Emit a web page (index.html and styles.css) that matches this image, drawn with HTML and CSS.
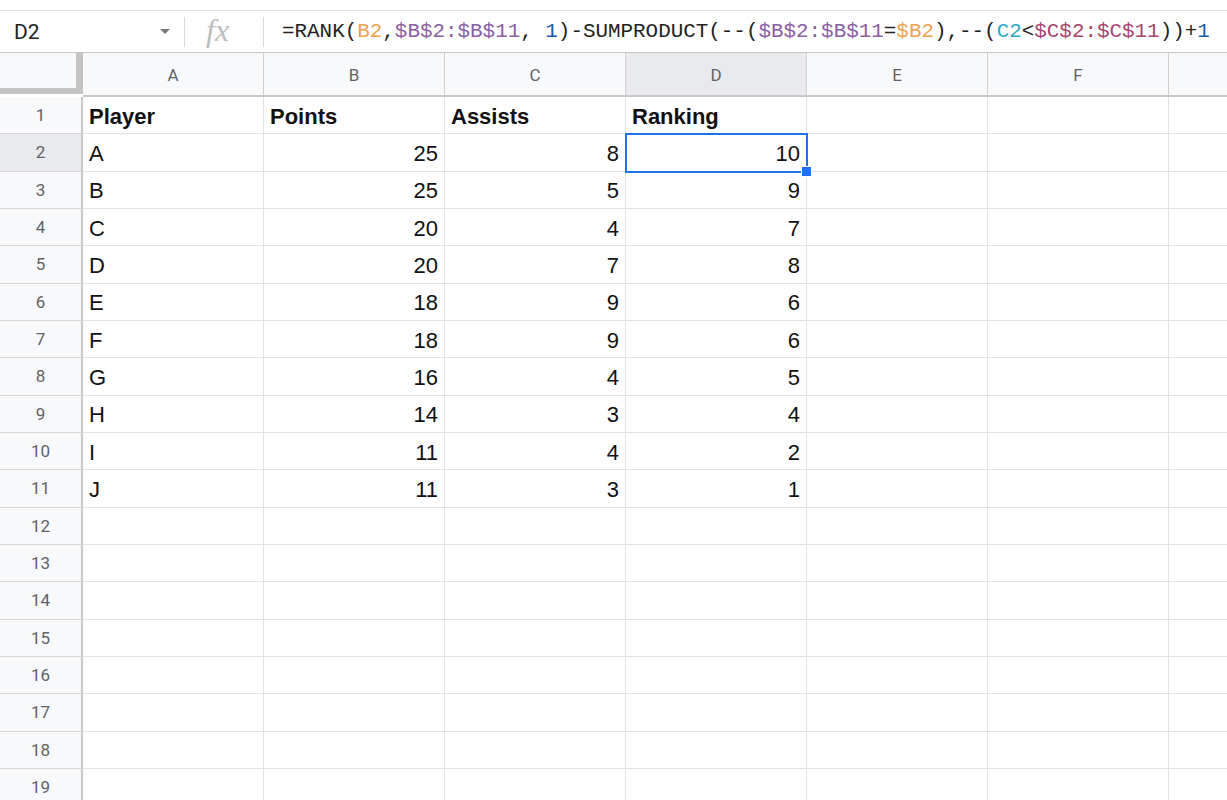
FILE: index.html
```html
<html>
  <head>
    <meta charset="utf-8" />
    <link rel="stylesheet" href="styles.css">
  </head>
  <body>
    <div class="formulaBar">
      <div class="formulaBar__nameBox">
        <span class="formulaBar__name">D2</span>
        <span class="formulaBar__caret"></span>
      </div>
      <div class="formulaBar__fx">fx</div>
      <div class="formulaBar__input">=RANK(<span class="ref--orange">B2</span>,<span class="ref--purple">$B$2:$B$11</span>, <span class="ref--blue">1</span>)-SUMPRODUCT(--(<span class="ref--purple">$B$2:$B$11</span>=<span class="ref--orange">$B2</span>),--(<span class="ref--teal">C2</span>&lt;<span class="ref--maroon">$C$2:$C$11</span>))+<span class="ref--blue">1</span></div>
    </div>

    <div class="sheet">
      <div class="sheet__row sheet__row--head">
        <div class="sheet__corner"></div>
        <div class="sheet__colHead">A</div>
        <div class="sheet__colHead">B</div>
        <div class="sheet__colHead">C</div>
        <div class="sheet__colHead is-selected">D</div>
        <div class="sheet__colHead">E</div>
        <div class="sheet__colHead">F</div>
        <div class="sheet__colHead"></div>
      </div>

      <div class="sheet__row">
        <div class="sheet__rowHead">1</div>
        <div class="sheet__cell is-bold">Player</div>
        <div class="sheet__cell is-bold">Points</div>
        <div class="sheet__cell is-bold">Assists</div>
        <div class="sheet__cell is-bold">Ranking</div>
        <div class="sheet__cell"></div>
        <div class="sheet__cell"></div>
        <div class="sheet__cell"></div>
      </div>
      <div class="sheet__row">
        <div class="sheet__rowHead is-selected">2</div>
        <div class="sheet__cell">A</div>
        <div class="sheet__cell is-num">25</div>
        <div class="sheet__cell is-num">8</div>
        <div class="sheet__cell is-num is-active">10</div>
        <div class="sheet__cell"></div>
        <div class="sheet__cell"></div>
        <div class="sheet__cell"></div>
      </div>
      <div class="sheet__row">
        <div class="sheet__rowHead">3</div>
        <div class="sheet__cell">B</div>
        <div class="sheet__cell is-num">25</div>
        <div class="sheet__cell is-num">5</div>
        <div class="sheet__cell is-num">9</div>
        <div class="sheet__cell"></div>
        <div class="sheet__cell"></div>
        <div class="sheet__cell"></div>
      </div>
      <div class="sheet__row">
        <div class="sheet__rowHead">4</div>
        <div class="sheet__cell">C</div>
        <div class="sheet__cell is-num">20</div>
        <div class="sheet__cell is-num">4</div>
        <div class="sheet__cell is-num">7</div>
        <div class="sheet__cell"></div>
        <div class="sheet__cell"></div>
        <div class="sheet__cell"></div>
      </div>
      <div class="sheet__row">
        <div class="sheet__rowHead">5</div>
        <div class="sheet__cell">D</div>
        <div class="sheet__cell is-num">20</div>
        <div class="sheet__cell is-num">7</div>
        <div class="sheet__cell is-num">8</div>
        <div class="sheet__cell"></div>
        <div class="sheet__cell"></div>
        <div class="sheet__cell"></div>
      </div>
      <div class="sheet__row">
        <div class="sheet__rowHead">6</div>
        <div class="sheet__cell">E</div>
        <div class="sheet__cell is-num">18</div>
        <div class="sheet__cell is-num">9</div>
        <div class="sheet__cell is-num">6</div>
        <div class="sheet__cell"></div>
        <div class="sheet__cell"></div>
        <div class="sheet__cell"></div>
      </div>
      <div class="sheet__row">
        <div class="sheet__rowHead">7</div>
        <div class="sheet__cell">F</div>
        <div class="sheet__cell is-num">18</div>
        <div class="sheet__cell is-num">9</div>
        <div class="sheet__cell is-num">6</div>
        <div class="sheet__cell"></div>
        <div class="sheet__cell"></div>
        <div class="sheet__cell"></div>
      </div>
      <div class="sheet__row">
        <div class="sheet__rowHead">8</div>
        <div class="sheet__cell">G</div>
        <div class="sheet__cell is-num">16</div>
        <div class="sheet__cell is-num">4</div>
        <div class="sheet__cell is-num">5</div>
        <div class="sheet__cell"></div>
        <div class="sheet__cell"></div>
        <div class="sheet__cell"></div>
      </div>
      <div class="sheet__row">
        <div class="sheet__rowHead">9</div>
        <div class="sheet__cell">H</div>
        <div class="sheet__cell is-num">14</div>
        <div class="sheet__cell is-num">3</div>
        <div class="sheet__cell is-num">4</div>
        <div class="sheet__cell"></div>
        <div class="sheet__cell"></div>
        <div class="sheet__cell"></div>
      </div>
      <div class="sheet__row">
        <div class="sheet__rowHead">10</div>
        <div class="sheet__cell">I</div>
        <div class="sheet__cell is-num">11</div>
        <div class="sheet__cell is-num">4</div>
        <div class="sheet__cell is-num">2</div>
        <div class="sheet__cell"></div>
        <div class="sheet__cell"></div>
        <div class="sheet__cell"></div>
      </div>
      <div class="sheet__row">
        <div class="sheet__rowHead">11</div>
        <div class="sheet__cell">J</div>
        <div class="sheet__cell is-num">11</div>
        <div class="sheet__cell is-num">3</div>
        <div class="sheet__cell is-num">1</div>
        <div class="sheet__cell"></div>
        <div class="sheet__cell"></div>
        <div class="sheet__cell"></div>
      </div>
      <div class="sheet__row">
        <div class="sheet__rowHead">12</div>
        <div class="sheet__cell"></div><div class="sheet__cell"></div><div class="sheet__cell"></div><div class="sheet__cell"></div><div class="sheet__cell"></div><div class="sheet__cell"></div><div class="sheet__cell"></div>
      </div>
      <div class="sheet__row">
        <div class="sheet__rowHead">13</div>
        <div class="sheet__cell"></div><div class="sheet__cell"></div><div class="sheet__cell"></div><div class="sheet__cell"></div><div class="sheet__cell"></div><div class="sheet__cell"></div><div class="sheet__cell"></div>
      </div>
      <div class="sheet__row">
        <div class="sheet__rowHead">14</div>
        <div class="sheet__cell"></div><div class="sheet__cell"></div><div class="sheet__cell"></div><div class="sheet__cell"></div><div class="sheet__cell"></div><div class="sheet__cell"></div><div class="sheet__cell"></div>
      </div>
      <div class="sheet__row">
        <div class="sheet__rowHead">15</div>
        <div class="sheet__cell"></div><div class="sheet__cell"></div><div class="sheet__cell"></div><div class="sheet__cell"></div><div class="sheet__cell"></div><div class="sheet__cell"></div><div class="sheet__cell"></div>
      </div>
      <div class="sheet__row">
        <div class="sheet__rowHead">16</div>
        <div class="sheet__cell"></div><div class="sheet__cell"></div><div class="sheet__cell"></div><div class="sheet__cell"></div><div class="sheet__cell"></div><div class="sheet__cell"></div><div class="sheet__cell"></div>
      </div>
      <div class="sheet__row">
        <div class="sheet__rowHead">17</div>
        <div class="sheet__cell"></div><div class="sheet__cell"></div><div class="sheet__cell"></div><div class="sheet__cell"></div><div class="sheet__cell"></div><div class="sheet__cell"></div><div class="sheet__cell"></div>
      </div>
      <div class="sheet__row">
        <div class="sheet__rowHead">18</div>
        <div class="sheet__cell"></div><div class="sheet__cell"></div><div class="sheet__cell"></div><div class="sheet__cell"></div><div class="sheet__cell"></div><div class="sheet__cell"></div><div class="sheet__cell"></div>
      </div>
      <div class="sheet__row">
        <div class="sheet__rowHead">19</div>
        <div class="sheet__cell"></div><div class="sheet__cell"></div><div class="sheet__cell"></div><div class="sheet__cell"></div><div class="sheet__cell"></div><div class="sheet__cell"></div><div class="sheet__cell"></div>
      </div>
    </div>
  </body>
</html>
```

FILE: styles.css
```css
html, body {
  margin: 0;
  padding: 0;
  background: #fff;
  overflow: hidden;
}

body {
  width: 1227px;
  height: 800px;
  font-family: "Liberation Sans", Arial, sans-serif;
  color: #111;
}

/* formula bar */
.formulaBar {
  box-sizing: border-box;
  margin-top: 10px;
  height: 43px;
  border-top: 1px solid #e3e3e3;
  border-bottom: 1px solid #c8c8c8;
  display: flex;
  align-items: center;
}

.formulaBar__nameBox {
  box-sizing: border-box;
  width: 185px;
  height: 30px;
  padding: 0 14px;
  border-right: 1px solid #dadada;
  display: flex;
  align-items: center;
  justify-content: space-between;
}

.formulaBar__name {
  font-family: Roboto, "Liberation Sans", sans-serif;
  font-size: 21px;
  color: #222;
}

.formulaBar__caret {
  width: 0;
  height: 0;
  border-left: 5px solid transparent;
  border-right: 5px solid transparent;
  border-top: 5px solid #777;
}

.formulaBar__fx {
  box-sizing: border-box;
  width: 79px;
  height: 30px;
  border-right: 1px solid #dadada;
  font-family: "Liberation Serif", serif;
  font-style: italic;
  font-size: 32px;
  line-height: 26px;
  color: #bdbdbd;
  padding-left: 21px;
}

.formulaBar__input {
  padding-left: 18px;
  font-family: "Liberation Mono", "DejaVu Sans Mono", monospace;
  font-size: 20.9px;
  color: #222;
  white-space: nowrap;
}

.ref--orange { color: #eea24c; }
.ref--purple { color: #8b5ea4; }
.ref--blue { color: #2058a8; }
.ref--teal { color: #2aa8c4; }
.ref--maroon { color: #a8456e; }

/* sheet grid */
.sheet {
  width: 1227px;
  overflow: hidden;
}

.sheet__row {
  display: grid;
  grid-template-columns: 83px repeat(7, 181px);
  height: 37.33px;
}

.sheet__row--head {
  height: 44px;
}

.sheet__corner {
  box-sizing: border-box;
  background: #f8f9fa;
  border-right: 7px solid #c4c4c4;
  border-bottom: 6px solid #c4c4c4;
  height: 41px;
}

.sheet__colHead {
  box-sizing: border-box;
  background: #f8f9fa;
  border-right: 1px solid #cfcfcf;
  border-bottom: 2px solid #c8c8c8;
  display: flex;
  align-items: center;
  justify-content: center;
  font-family: Roboto, "Liberation Sans", sans-serif;
  font-size: 17px;
  color: #5f6368;
  padding-top: 1px;
}

.sheet__rowHead {
  box-sizing: border-box;
  background: #f8f9fa;
  border-right: 2px solid #c8c8c8;
  border-bottom: 1px solid #d6d6d6;
  display: flex;
  align-items: center;
  justify-content: center;
  font-family: Roboto, "Liberation Sans", sans-serif;
  font-size: 17px;
  color: #5f6368;
}

.sheet__colHead.is-selected, .sheet__rowHead.is-selected {
  background: #e8eaed;
}

.sheet__cell {
  box-sizing: border-box;
  border-right: 1px solid #e2e2e2;
  border-bottom: 1px solid #e2e2e2;
  padding: 3px 6px 0 6px;
  display: flex;
  align-items: center;
  font-size: 22px;
  color: #111;
  white-space: nowrap;
  overflow: hidden;
}

.sheet__cell.is-bold {
  font-weight: bold;
}

.sheet__cell.is-num {
  justify-content: flex-end;
}

.sheet__cell.is-active {
  position: relative;
  overflow: visible;
  outline: 2px solid #1a73e8;
  outline-offset: -1px;
}

.sheet__cell.is-active::after {
  content: "";
  position: absolute;
  right: -6px;
  bottom: -6px;
  width: 9px;
  height: 9px;
  background: #1a73e8;
  border: 1px solid #fff;
}
```
